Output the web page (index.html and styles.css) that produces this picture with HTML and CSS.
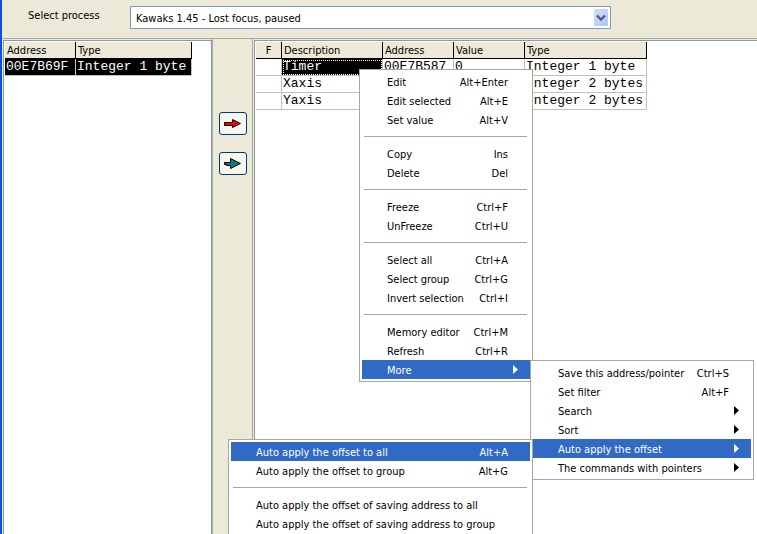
FILE: index.html
```html
<!DOCTYPE html>
<html lang="en">
<head>
<meta charset="utf-8">
<title>Select process</title>
<link rel="stylesheet" href="styles.css">
</head>
<body>
<div class="window">
  <header class="toolbar">
    <label class="toolbar-label" for="process">Select process</label>
    <div class="combo">
      <select id="process" class="combo-select">
        <option>Kawaks 1.45 - Lost focus, paused</option>
      </select>
      <svg class="combo-arrow" viewBox="0 0 14 17" aria-hidden="true">
        <defs><linearGradient id="g" x1="0" y1="0" x2="1" y2="1"><stop offset="0" stop-color="#d3e0fd"/><stop offset="1" stop-color="#adc4f6"/></linearGradient></defs>
        <rect width="14" height="17" rx="1" fill="url(#g)"/>
        <path d="M3 6.500L7 10.500L11 6.500" fill="none" stroke="#4d6185" stroke-width="2.400"/>
      </svg>
    </div>
  </header>
  <main class="panes">
    <section class="pane pane-results">
      <table class="grid grid-results">
        <colgroup><col class="c-result-address"><col class="c-result-type"></colgroup>
        <thead><tr><th>Address</th><th>Type</th></tr></thead>
        <tbody><tr class="selected"><td>00E7B69F</td><td>Integer 1 byte</td></tr></tbody>
      </table>
    </section>
    <nav class="transfer">
      <button class="transfer-button" type="button" aria-label="Add selected">
        <svg width="18" height="12" viewBox="0 0 18 12"><path d="M.500 4.500H8.500V1.500L16.500 5.500L8.500 9.500V7.500H.500Z" fill="#f00" stroke="#000"/></svg>
      </button>
      <button class="transfer-button" type="button" aria-label="Add all">
        <svg width="18" height="12" viewBox="0 0 18 12"><path d="M.500 4.500H6.500V.500L16.500 5.500L6.500 10.500V7.500H2.500V6.500H.500Z" fill="#008080" stroke="#000"/></svg>
      </button>
    </nav>
    <section class="pane pane-list">
      <table class="grid grid-list">
        <colgroup><col class="c-flag"><col class="c-description"><col class="c-address"><col class="c-value"><col class="c-type"></colgroup>
        <thead><tr><th class="flag">F</th><th>Description</th><th>Address</th><th>Value</th><th>Type</th></tr></thead>
        <tbody>
          <tr><td></td><td class="focused">Timer</td><td>00E7B587</td><td>0</td><td>Integer 1 byte</td></tr>
          <tr><td></td><td>Xaxis</td><td></td><td></td><td>Integer 2 bytes</td></tr>
          <tr><td></td><td>Yaxis</td><td></td><td></td><td>Integer 2 bytes</td></tr>
        </tbody>
      </table>
    </section>
  </main>
</div>

<ul class="menu context-menu">
  <li><button class="item" type="button"><span>Edit</span><span>Alt+Enter</span></button></li>
  <li><button class="item" type="button"><span>Edit selected</span><span>Alt+E</span></button></li>
  <li><button class="item" type="button"><span>Set value</span><span>Alt+V</span></button></li>
  <li class="separator"></li>
  <li><button class="item" type="button"><span>Copy</span><span>Ins</span></button></li>
  <li><button class="item" type="button"><span>Delete</span><span>Del</span></button></li>
  <li class="separator"></li>
  <li><button class="item" type="button"><span>Freeze</span><span>Ctrl+F</span></button></li>
  <li><button class="item" type="button"><span>UnFreeze</span><span>Ctrl+U</span></button></li>
  <li class="separator"></li>
  <li><button class="item" type="button"><span>Select all</span><span>Ctrl+A</span></button></li>
  <li><button class="item" type="button"><span>Select group</span><span>Ctrl+G</span></button></li>
  <li><button class="item" type="button"><span>Invert selection</span><span>Ctrl+I</span></button></li>
  <li class="separator"></li>
  <li><button class="item" type="button"><span>Memory editor</span><span>Ctrl+M</span></button></li>
  <li><button class="item" type="button"><span>Refresh</span><span>Ctrl+R</span></button></li>
  <li class="parent">
    <button class="item active has-submenu" type="button"><span>More</span><svg width="5" height="9" viewBox="0 0 5 9"><path d="M0 0L5 4.500L0 9Z" fill="currentColor"/></svg></button>
    <ul class="menu submenu-right">
      <li><button class="item" type="button"><span>Save this address/pointer</span><span>Ctrl+S</span></button></li>
      <li><button class="item" type="button"><span>Set filter</span><span>Alt+F</span></button></li>
      <li><button class="item has-submenu" type="button"><span>Search</span><svg width="5" height="9" viewBox="0 0 5 9"><path d="M0 0L5 4.500L0 9Z" fill="currentColor"/></svg></button></li>
      <li><button class="item has-submenu" type="button"><span>Sort</span><svg width="5" height="9" viewBox="0 0 5 9"><path d="M0 0L5 4.500L0 9Z" fill="currentColor"/></svg></button></li>
      <li class="parent">
        <button class="item active has-submenu" type="button"><span>Auto apply the offset</span><svg width="5" height="9" viewBox="0 0 5 9"><path d="M0 0L5 4.500L0 9Z" fill="currentColor"/></svg></button>
        <ul class="menu submenu-left">
          <li><button class="item active" type="button"><span>Auto apply the offset to all</span><span>Alt+A</span></button></li>
          <li><button class="item" type="button"><span>Auto apply the offset to group</span><span>Alt+G</span></button></li>
          <li class="separator"></li>
          <li><button class="item" type="button"><span>Auto apply the offset of saving address to all</span></button></li>
          <li><button class="item" type="button"><span>Auto apply the offset of saving address to group</span></button></li>
        </ul>
      </li>
      <li><button class="item has-submenu" type="button"><span>The commands with pointers</span><svg width="5" height="9" viewBox="0 0 5 9"><path d="M0 0L5 4.500L0 9Z" fill="currentColor"/></svg></button></li>
    </ul>
  </li>
</ul>
</body>
</html>
```
FILE: styles.css
```css
* { box-sizing: border-box; }

body {
  margin: 0;
  height: 100vh;
  overflow: hidden;
  font: 11px/18px Tahoma, "DejaVu Sans Condensed", "Liberation Sans", sans-serif;
  color: #000;
  background: #ece9d8;
}

button, select { font: inherit; color: inherit; }

.window {
  display: flex;
  flex-direction: column;
  height: 100%;
  border-left: 2px solid #0a50e0;
}

/* Process picker */
.toolbar {
  display: flex;
  gap: 33px;
  padding: 6px 146px 9px 26px;
}
.toolbar-label { flex: none; width: 69px; line-height: 20px; white-space: nowrap; }
.combo {
  display: flex;
  flex: 1;
  align-items: center;
  height: 23px;
  padding-right: 2px;
  background: #fff;
  border: 1px solid #7f9db9;
}
.combo-select {
  flex: 1;
  appearance: none;
  padding: 2px 5px 0;
  border: 0;
  background: none;
}
.combo-arrow { width: 14px; height: 17px; }

/* Panes */
.panes {
  display: flex;
  flex: 1;
  min-height: 0;
  border-top: 1px solid #aca899;
}
.pane {
  margin-top: 1px;
  padding: 1px;
  background: #fff;
  border: 1px solid #7f9db9;
  border-bottom: 0;
}
.pane-results { flex: 0 0 209px; margin-left: 1px; }
.pane-list { flex: 1; margin-left: 1px; border-right: 0; }
.transfer {
  display: flex;
  flex: 0 0 41px;
  flex-direction: column;
  align-items: center;
  gap: 17px;
  padding-top: 73px;
  border: 1px solid #aca899;
  border-width: 0 1px;
}
.transfer-button {
  display: flex;
  align-items: center;
  justify-content: center;
  width: 28px;
  height: 23px;
  padding: 0;
  background: #f6f5f0;
  border: 1px solid #003c74;
  border-radius: 3px;
}

/* Data grids */
.grid { table-layout: fixed; border-collapse: separate; border-spacing: 0; }
.grid-results { width: 187px; }
.grid-list { width: 391px; }
.c-result-address { width: 71px; }
.c-result-type { width: 116px; }
.c-flag { width: 26px; }
.c-description { width: 101px; }
.c-address { width: 71px; }
.c-value { width: 71px; }
.c-type { width: 122px; }
.grid th {
  height: 17px;
  padding: 1px 2px 0;
  font-weight: normal;
  text-align: left;
  line-height: 15px;
  background: #ece9d8;
  border-right: 1px solid #000;
  border-bottom: 1px solid #000;
}
.grid th.flag { text-align: center; }
.grid td {
  height: 17px;
  padding: 0 1px;
  font: 13px/16px "Courier New", "Liberation Mono", monospace;
  white-space: nowrap;
  border-right: 1px solid #c0c0c0;
  border-bottom: 1px solid #c0c0c0;
}
.selected td, .grid td.focused { color: #fff; background: #000; }
.grid td.focused { outline: 1px dotted #fff; outline-offset: -2px; }

/* Menus */
.menu {
  position: absolute;
  margin: 0;
  padding: 2px;
  list-style: none;
  background: #fff;
  border: 1px solid #aca899;
}
.context-menu { left: 359px; top: 69px; width: 174px; }
.submenu-right { left: 100%; top: 0; width: 224px; }
.submenu-left { right: 100%; top: 0; width: 305px; }
.parent { position: relative; }
.item {
  display: flex;
  align-items: center;
  justify-content: space-between;
  width: 100%;
  height: 19px;
  padding: 0 22px 0 25px;
  border: 0;
  background: none;
  text-align: left;
  white-space: nowrap;
}
.item span { padding-top: 2px; line-height: 17px; }
.item.has-submenu { padding-right: 12px; }
.item.active { color: #fff; background: #316ac5; }
.separator {
  height: 1px;
  margin: 7px 3px 7px 2px;
  background: #aca899;
}
```
